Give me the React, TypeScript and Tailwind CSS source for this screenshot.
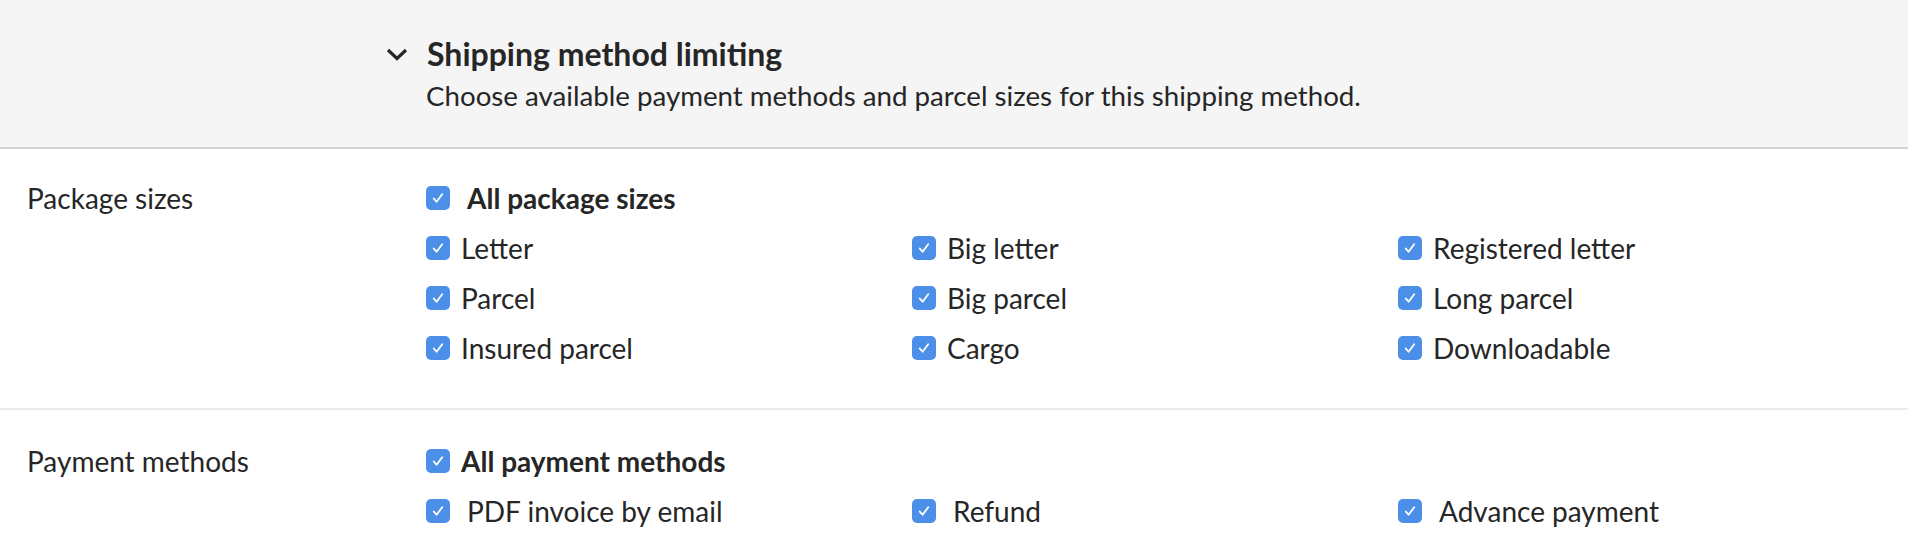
const packageSizes = [
  "Letter",
  "Big letter",
  "Registered letter",
  "Parcel",
  "Big parcel",
  "Long parcel",
  "Insured parcel",
  "Cargo",
  "Downloadable",
];

const paymentMethods = ["PDF invoice by email", "Refund", "Advance payment"];

const Check = () => (
  <span className="w-[24px] h-[24px] rounded-[5px] bg-[#4b8fe8] flex items-center justify-center shrink-0">
    <svg width="14" height="14" viewBox="0 0 13 13" fill="none">
      <path
        d="M2.6 7 L5.2 10 L10.4 3"
        stroke="white"
        strokeWidth="1.7"
        strokeLinecap="round"
        strokeLinejoin="round"
      />
    </svg>
  </span>
);

const Option = ({
  label,
  bold = false,
  gap = "gap-[11px]",
}: {
  label: string;
  bold?: boolean;
  gap?: string;
}) => (
  <label className={`flex items-center h-[50px] ${gap}`}>
    <Check />
    <span className={bold ? "font-bold" : ""}>{label}</span>
  </label>
);

export default function App() {
  return (
    <div
      className="w-full min-h-screen bg-white text-[#262626] text-[28px]"
      style={{ fontFamily: "Lato, 'Noto Sans', sans-serif" }}
    >
      <div className="bg-[#f5f5f5] border-b-2 border-[#d2d2d2] h-[149px] pl-[386px] pt-[29px]">
        <div className="flex items-center gap-[19px]">
          <svg width="22" height="16" viewBox="0 0 22 16" fill="none">
            <path d="M2 4 L11 12.5 L20 4" stroke="#262626" strokeWidth="3.2" />
          </svg>
          <h2 className="text-[32px] font-bold leading-[50px]">Shipping method limiting</h2>
        </div>
        <p className="pl-[40px] leading-[34px] text-[27.7px]">
          Choose available payment methods and parcel sizes for this shipping method.
        </p>
      </div>

      <section className="flex border-b-2 border-[#ebebeb] pt-[24px] pb-[35px]">
        <div className="w-[426px] pl-[27px] leading-[50px] shrink-0">Package sizes</div>
        <div className="flex-1">
          <Option label="All package sizes" bold gap="gap-[17px]" />
          <div className="grid grid-cols-[486px_486px_1fr]">
            {packageSizes.map((s) => (
              <Option key={s} label={s} />
            ))}
          </div>
        </div>
      </section>

      <section className="flex pt-[26px]">
        <div className="w-[426px] pl-[27px] leading-[50px] shrink-0">Payment methods</div>
        <div className="flex-1">
          <Option label="All payment methods" bold />
          <div className="grid grid-cols-[486px_486px_1fr]">
            {paymentMethods.map((s) => (
              <Option key={s} label={s} gap="gap-[17px]" />
            ))}
          </div>
        </div>
      </section>
    </div>
  );
}
